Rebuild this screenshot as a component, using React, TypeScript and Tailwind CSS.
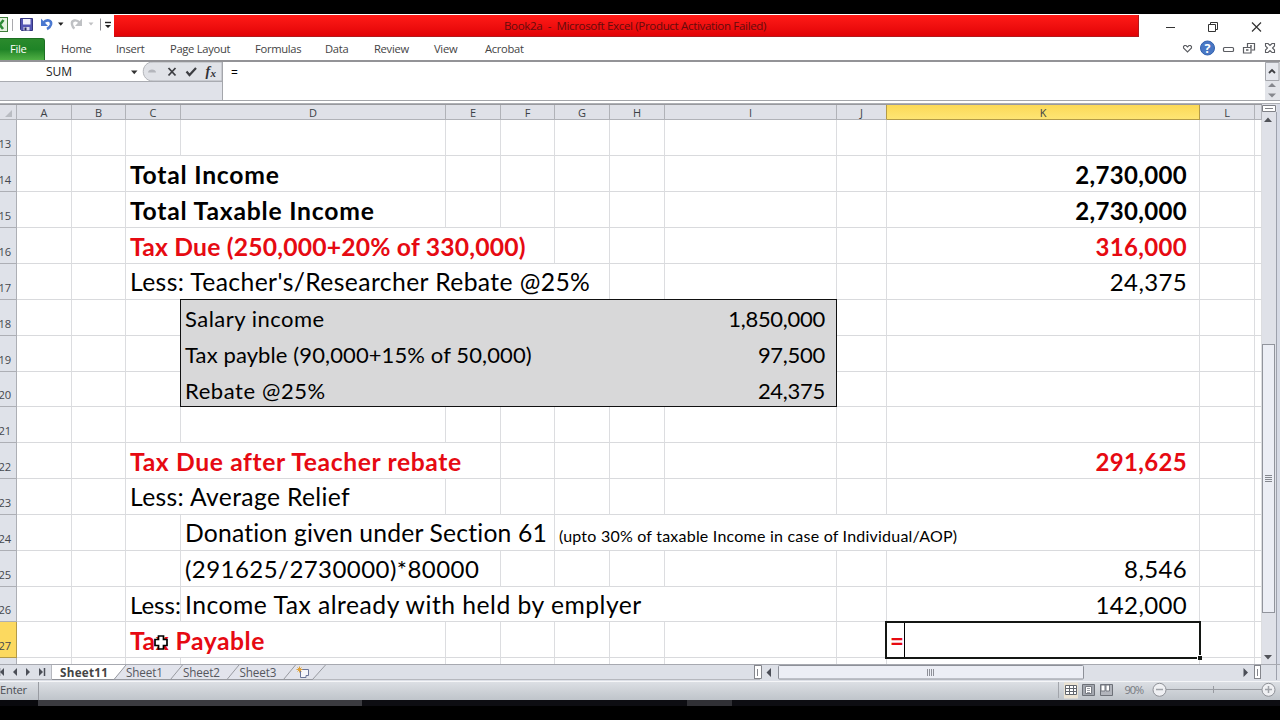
import type { ReactNode } from "react"
import clsx from "clsx"

type Cell = {
    text: string
    className: string
}

type Row = {
    no: number
    height: string
    cells?: Record<string, Cell>
    // columns whose right gridline is covered by overflowing text
    open?: string
    active?: boolean
}

const COLUMNS = "ABCDEFGHIJKLM".split("")

const GRID = "grid grid-cols-[17px_55px_54px_55px_265px_55px_54px_55px_55px_172px_50px_313px_55px_7px]"

const BOLD = "font-bold text-black pt-0.5"
const RED = "font-bold text-[#e60a12] pt-0.5"
const BOXED = "text-[22px] pt-[3px]"
const LABEL = "text-[24.700px]"

const ROWS: Row[] = [
    { no: 13, height: "h-9" },
    {
        no: 14, height: "h-9", open: "C", cells: {
            C: { text: "Total Income", className: `${BOLD} ${LABEL} tracking-[0.77px]` },
            K: { text: "2,730,000", className: `${BOLD} tracking-[0.35px]` },
        }
    },
    {
        no: 15, height: "h-9", open: "C", cells: {
            C: { text: "Total Taxable Income", className: `${BOLD} ${LABEL} tracking-[0.78px]` },
            K: { text: "2,730,000", className: `${BOLD} tracking-[0.35px]` },
        }
    },
    {
        no: 16, height: "h-9", open: "CDE", cells: {
            C: { text: "Tax Due (250,000+20% of 330,000)", className: `${RED} ${LABEL} tracking-[0.19px]` },
            K: { text: "316,000", className: `${RED} tracking-[0.35px]` },
        }
    },
    {
        no: 17, height: "h-9", open: "CDEF", cells: {
            C: { text: "Less: Teacher's/Researcher Rebate @25%", className: `${LABEL} pt-px tracking-[0.39px]` },
            K: { text: "24,375", className: "tracking-[0.35px]" },
        }
    },
    {
        no: 18, height: "h-9", cells: {
            D: { text: "Salary income", className: `${BOXED} tracking-[0.48px]` },
            I: { text: "1,850,000", className: `${BOXED} tracking-[-0.28px]` },
        }
    },
    {
        no: 19, height: "h-9", cells: {
            D: { text: "Tax payble (90,000+15% of 50,000)", className: `${BOXED} tracking-[0.11px]` },
            I: { text: "97,500", className: `${BOXED} tracking-[-0.28px]` },
        }
    },
    {
        no: 20, height: "h-[35px]", cells: {
            D: { text: "Rebate @25%", className: `${BOXED} tracking-[0.58px]` },
            I: { text: "24,375", className: `${BOXED} tracking-[-0.28px]` },
        }
    },
    { no: 21, height: "h-9" },
    {
        no: 22, height: "h-9", open: "CD", cells: {
            C: { text: "Tax Due after Teacher rebate", className: `${RED} ${LABEL} tracking-[0.62px]` },
            K: { text: "291,625", className: `${RED} tracking-[0.35px]` },
        }
    },
    {
        no: 23, height: "h-9", open: "C", cells: {
            C: { text: "Less: Average Relief", className: `${LABEL} pt-px tracking-[0.35px]` },
        }
    },
    {
        no: 24, height: "h-9", open: "DEGHIJ", cells: {
            D: { text: "Donation given under Section 61", className: `${LABEL} pt-px tracking-[0.18px]` },
            G: { text: "(upto 30% of taxable Income in case of Individual/AOP)", className: "text-base/7 pt-1.5 tracking-[0.22px]" },
        }
    },
    {
        no: 25, height: "h-9", open: "D", cells: {
            D: { text: "(291625/2730000)*80000", className: "tracking-[0.45px]" },
            K: { text: "8,546", className: "tracking-[0.35px]" },
        }
    },
    {
        no: 26, height: "h-[35px]", open: "DEFGH", cells: {
            C: { text: "Less:", className: "pt-px" },
            D: { text: "Income Tax already with held by emplyer", className: `${LABEL} pt-px tracking-[0.49px]` },
            K: { text: "142,000", className: "pt-px tracking-[0.35px]" },
        }
    },
    {
        no: 27, height: "h-9", open: "C", active: true, cells: {
            C: { text: "Tax Payable", className: `${RED} ${LABEL} tracking-[0.52px]` },
        }
    },
]

const MENU = [
    { label: "Home", width: "w-[55px]" },
    { label: "Insert", width: "w-[54px]" },
    { label: "Page Layout", width: "w-[85px]" },
    { label: "Formulas", width: "w-[70px]" },
    { label: "Data", width: "w-[49px]" },
    { label: "Review", width: "w-[60px]" },
    { label: "View", width: "w-[51px]" },
    { label: "Acrobat", width: "w-[56px]" },
]

function TitleBar() {
    return (
        <div className="flex h-[23px] bg-white">
            <div className="w-[114px] shrink-0">
                <svg width="114" height="23" viewBox="0 14 114 23">
                    <rect x="-6" y="17.500" width="13.500" height="14" fill="#e4f1df" stroke="#3f7d3a" />
                    <path d="M-4 20l7 9M3.500 20l-7 9" stroke="#2c8a35" strokeWidth="2.600" />
                    <path d="M12.500 19v12" stroke="#a9a9ad" />
                    <path d="M20.500 18.500h12v12h-11l-1-1z" fill="#5456b4" stroke="#34357f" />
                    <path d="M23 19h7.500v5.500H23z" fill="#f1f1fb" />
                    <path d="M23.500 27h6v3.500h-6z" fill="#d8d8ec" />
                    <path d="M24.500 27.500h2v3h-2z" fill="#24255e" />
                    <path d="M43.500 22.500c3-3.500 8.500-2.500 7.500 2-.5 2-2 3.500-4 4.500" fill="none" stroke="#4a78d0" strokeWidth="2.600" />
                    <path d="M41 18.500v7.500h7z" fill="#4a78d0" />
                    <path d="M58 22.500h5.500l-2.750 3.200zM105 25h6l-3 3z" fill="#222" />
                    <path d="M79.500 22.500c-3-3.500-8.500-2.500-7.500 2 .3 1.500 1 3 2.500 4" fill="none" stroke="#bfc1c4" strokeWidth="2.400" />
                    <path d="M82 18.500v7.500h-7z" fill="#bfc1c4" />
                    <path d="M88.500 22.500h5l-2.500 3z" fill="#c0c1c3" />
                    <path d="M100.500 18.500v12" stroke="#8c8c92" />
                    <path d="M105 22.500h6" stroke="#222" strokeWidth="1.400" />
                </svg>
            </div>
            <div className="mt-px h-[22px] w-[1025px] shrink-0 border-r border-b border-[#b3181c] bg-gradient-to-b from-[#ff1a17] to-[#e20206] pl-[390px] font-[Open_Sans,sans-serif] text-[11.500px] leading-[22px] whitespace-pre text-[#650c0c]">
                <span className="tracking-[-0.320px]">Book2a  -  Microsoft Excel (Product Activation Failed)</span>
            </div>
            <svg className="shrink-0" width="141" height="23" viewBox="1139 14 141 23" fill="none" stroke="#333">
                <path d="M1166 27.500h9" />
                <path d="M1208.500 24.500h7v7h-7zM1210.500 24v-1.500h7v7h-1.500" />
                <path d="M1252 22.500l9 9M1261 22.500l-9 9" strokeWidth="1.200" />
            </svg>
        </div>
    )
}

function MenuBar() {
    return (
        <div className="flex h-[23px] bg-white font-[Open_Sans,sans-serif] text-[11.200px] leading-[24px] tracking-[-0.300px] text-[#444]">
            <div className="mt-[1px] h-[22px] w-[45px] rounded-tr-[3px] border-t border-r border-[#1c6f22] bg-gradient-to-b from-[#2a8a2c] via-[#1f8427] to-[#4fb044] pl-[10px] leading-[20px] text-white">
                File
            </div>
            <div className="flex flex-1 pl-4">
                {MENU.map(item => (
                    <div key={item.label} className={clsx("shrink-0 whitespace-nowrap", item.width)}>
                        {item.label}
                    </div>
                ))}
            </div>
            <svg width="100" height="23" viewBox="1180 37 100 23" fill="none" stroke="#5b5d62">
                <path d="M1183.500 46.500l1-1h1.500l1.500 1.500 1.500-1.500h1.500l1 1v1.500l-4 4-4-4z" strokeWidth="1.100" />
                <circle cx="1207.500" cy="48" r="7" fill="#4877c4" stroke="#3261ae" />
                <text x="1204.400" y="52.500" fill="white" stroke="none" className="text-[12.500px] font-bold">?</text>
                <rect x="1223.500" y="47.500" width="10" height="4" rx="1" strokeWidth="1.200" />
                <path d="M1247.500 47v-3.500h7v6.500h-3" strokeWidth="1.200" />
                <path d="M1243.500 47.500h7.500v5.500h-7.500z" strokeWidth="1.200" />
                <path d="M1246 50h2.500M1250 46h2" strokeWidth="1.500" />
                <path d="M1265.500 43.500h2.500l2 2 2-2h2.500v2.500l-2 2 2 2v2.500h-2.500l-2-2-2 2h-2.500v-2.500l2-2-2-2z" strokeWidth="1.100" />
            </svg>
        </div>
    )
}

function FormulaBar() {
    return (
        <div className="flex h-[41px] border-t-2 border-[#939397] bg-white">
            <div className="flex w-[223px] shrink-0 flex-col border-r border-[#a4a6ab]">
                <div className="flex h-[20px] border-b border-[#a9abb1]">
                    <div className="w-[128px] pl-[46px] font-[Open_Sans,sans-serif] text-[12px] leading-[20px] tracking-[-0.100px] text-[#222]">SUM</div>
                    <svg width="94" height="19" viewBox="128 62 94 19">
                        <path d="M222 62h-69c-13 0-13 19 0 19h69z" fill="#e0e2e7" stroke="#b1b3b8" />
                        <path d="M148 72.500c0-4 8-4 8 0z" fill="#b4b6bc" />
                        <path d="M131 70.500h6.500l-3.250 3.700z" fill="#333" />
                        <path d="M168.500 68l7 7.500M175.500 68l-7 7.500" stroke="#3d3e42" strokeWidth="1.800" />
                        <path d="M186.500 71.500l3 3.500 6.500-7" fill="none" stroke="#3d3e42" strokeWidth="2.200" />
                        <text x="205.500" y="76" fill="#303136" className="font-[Liberation_Serif,serif] text-[14px] font-bold italic">f</text>
                        <text x="210.500" y="76.500" fill="#303136" className="font-[Liberation_Serif,serif] text-[11px] font-bold italic">x</text>
                    </svg>
                </div>
                <div className="h-[18px] bg-[#e0e2e9]" />
                <div className="h-px bg-[#a4a6ab]" />
            </div>
            <div className="flex flex-1 flex-col">
                <div className="h-[38px] pl-2 font-[Open_Sans,sans-serif] text-xs leading-[21px] text-black">=</div>
                <div className="h-px bg-[#a4a6ab]" />
            </div>
            <svg width="16" height="39" viewBox="1264 62 16 39">
                <path d="M1265 62h15v38h-15z" fill="#e2e4e9" />
                <path d="M1265.500 62.500h13.500v18h-13.500z" fill="#e6e8ee" stroke="#a5a7ad" />
                <path d="M1269 73l3-3 3 3" fill="none" stroke="#3d3e42" strokeWidth="1.800" />
                <path d="M1268 87h8l-4-4zM1268 93.500h8l-4 4z" fill="#85878d" />
                <path d="M1264 100.500h16" stroke="#a4a6ab" />
            </svg>
        </div>
    )
}

function HeaderRow() {
    return (
        <div className={`${GRID} h-4 border-t border-[#98999e] bg-[#dfe1e8] font-[Open_Sans,sans-serif] text-[11px] leading-[15px] text-[#3c3f45]`}>
            <div className="flex h-[15px] items-end justify-end border-r border-b border-[#b0b2b8] pr-1 pb-[2px]">
                <svg width="7" height="7"><path d="M7 0v7H0z" fill="#b9bcc2" /></svg>
            </div>
            {COLUMNS.map(col => (
                <div
                    key={col}
                    className={clsx(
                        "h-[15px] border-r border-b text-center",
                        col === "K" ? "border-[#b39a48] bg-gradient-to-b from-[#fbd957] to-[#fee573]" : "border-[#b0b2b8]",
                        col === "J" && "border-r-[#b39a48]"
                    )}
                >
                    {col === "M" ? "" : col}
                </div>
            ))}
        </div>
    )
}

function SheetRow({ row }: { row: Row }) {
    return (
        <div className={clsx(GRID, row.height)}>
            <div
                className={clsx(
                    "flex items-end overflow-hidden border-r border-b font-[Open_Sans,sans-serif] text-[11.200px] leading-[14px] tracking-[-0.200px] text-[#44474d]",
                    row.active ? "border-[#b39a48] bg-[#fcd95f]" : "border-[#adafb5] bg-[#dfe2e9]"
                )}
            >
                <span className="-ml-[1.500px] pb-1">{row.no}</span>
            </div>
            {COLUMNS.map(col => {
                const cell = row.cells?.[col]
                return (
                    <div
                        key={col}
                        className={clsx(
                            "flex items-center border-b border-b-[#d9dadd] whitespace-nowrap",
                            !row.open?.includes(col) && "border-r border-r-[#dcdde0]",
                            col === "K" || col === "I" ? "justify-end" : "justify-start pl-1",
                            col === "K" && "pr-3",
                            col === "I" && "pr-[11px]"
                        )}
                    >
                        {cell && <span className={clsx("relative z-10 leading-7", cell.className)}>{cell.text}</span>}
                    </div>
                )
            })}
        </div>
    )
}

function Spreadsheet({ children }: { children?: ReactNode }) {
    return (
        <div className="relative h-[560px] w-[1262px] shrink-0 overflow-hidden bg-white font-[Lato,sans-serif] text-[24px] text-black">
            <HeaderRow />
            {ROWS.map(row => <SheetRow key={row.no} row={row} />)}
            <div className={`${GRID} h-[7px]`}>
                <div className="border-r border-[#adafb5] bg-[#dfe2e9]" />
                {COLUMNS.map(col => <div key={col} className="border-r border-[#dcdde0]" />)}
            </div>
            {children}
        </div>
    )
}

function VerticalScroll() {
    return (
        <svg width="18" height="560" viewBox="1262 104 18 560">
            <path d="M1262 104h18v560h-18z" fill="#dfe1e8" />
            <path d="M1262.500 105.500h13v6h-13z" fill="#fff" stroke="#7f8187" />
            <path d="M1265 108.500h8" stroke="#7f8187" />
            <path d="M1264 122h8l-4-4.500zM1264 655h8l-4 4.500z" fill="#515359" />
            <rect x="1262.500" y="344.500" width="12" height="268" fill="#eceef5" stroke="#91949c" />
            <path d="M1265 475.500h7M1265 477.500h7M1265 479.500h7M1265 481.500h7" stroke="#85888f" />
            <path d="M1276.500 112v552" stroke="#9da1ac" />
            <path d="M1277 104h3v560h-3z" fill="#d5d9e4" />
        </svg>
    )
}

function SheetTabs() {
    return (
        <div className="flex h-[17px] border-t border-[#a7a9b0] bg-[#dde0e7]">
            <svg width="760" height="16" viewBox="0 665 760 16" className="font-[Open_Sans,sans-serif] text-[11.700px]">
                <path d="M52 665h74l-12 14H52z" fill="#fff" />
                <path d="M0 679.500h760M51.500 665v14" stroke="#b6b8be" />
                <path d="M52 679.500h62" stroke="#8d8f95" />
                <path d="M126 665h200l-13 14.500H114z" fill="#e2e4ec" />
                <path d="M114 679.500l12-14.500M170.500 679.500l12-14.500M227 679.500l12-14.500M283.500 679.500l12-14.500M312.500 679.500l13-14.500M114 679.500h199" fill="none" stroke="#989aa0" />
                <path d="M4 668v8l-4-4zM17 668v8l-4-4zM26 668v8l4-4zM39 668v8l4-4z" fill="#4b4e57" />
                <path d="M44.500 668v8M-.500 668v8" stroke="#4b4e57" strokeWidth="1.500" />
                <text x="60" y="676.500" fill="#444" textLength="48" className="font-bold">Sheet11</text>
                <text x="126" y="676.500" fill="#55575e" textLength="37">Sheet1</text>
                <text x="183" y="676.500" fill="#55575e" textLength="37">Sheet2</text>
                <text x="239.500" y="676.500" fill="#55575e" textLength="37">Sheet3</text>
                <path d="M300.500 669.500h8v6h-2.500v2h-5.500z" fill="#f5f6fb" stroke="#6c7699" />
                <path d="M299.500 666.500v6M296.500 669.500h6M297.500 667.500l4 4M301.500 667.500l-4 4" stroke="#dda13c" />
                <rect x="754.500" y="665.500" width="6" height="13" fill="#fff" stroke="#84868c" />
                <path d="M757.500 669v7" stroke="#84868c" />
            </svg>
            <svg width="520" height="16" viewBox="760 665 520 16">
                <path d="M760 665.500h1.500v13H760" fill="#fff" stroke="#84868c" />
                <path d="M771 668v9l-4.500-4.500zM1243.500 668v9l4.500-4.500z" fill="#4b4e57" />
                <rect x="778.500" y="665.500" width="305" height="13.500" rx="1" fill="#eceef5" stroke="#8d9098" />
                <path d="M927.500 669v7M929.500 669v7M931.500 669v7M933.500 669v7" stroke="#8e9098" />
                <rect x="1254.500" y="665.500" width="6" height="13" fill="#fff" stroke="#84868c" />
                <path d="M1257.500 669v7" stroke="#84868c" />
                <path d="M1276.500 665v15" stroke="#9da1ac" />
            </svg>
        </div>
    )
}

function StatusBar() {
    return (
        <div className="flex h-[19px] border-t border-[#f5f6f8] bg-gradient-to-b from-[#dcdfe4] to-[#bfc4ca] font-[Open_Sans,sans-serif] text-[11.200px] leading-[16px] text-[#4b4e54]">
            <div className="w-[39px] border-r border-[#999ca2] tracking-[-0.200px]">Enter</div>
            <div className="flex-1" />
            <svg width="222" height="18" viewBox="1058 682 222 18" fill="none">
                <path d="M1058.500 682v16" stroke="#a2a5ab" />
                <rect x="1064" y="682.500" width="14" height="16" fill="#ebe3d3" />
                <path d="M1065.500 685.500h11v9h-11zM1065.500 688.500h11M1065.500 691.500h11M1069.500 685.500v9M1073.500 685.500v9" fill="#fff" stroke="#62666d" />
                <path d="M1082.500 684.500h12v11h-12z" fill="#a4a8b0" stroke="#6d7178" />
                <path d="M1085.500 686.500h6v7h-6z" fill="#fff" stroke="#777b82" />
                <path d="M1087 688.500h3M1087 690.500h3M1087 692.500h3" stroke="#9a9da5" />
                <path d="M1100.500 684.500h12v11h-12z" fill="#b2b5bc" stroke="#6d7178" />
                <path d="M1101 685h4v6h-4zM1106 685h3.500v6h-3.500z" fill="#fff" stroke="#777b82" />
                <text x="1124.500" y="694" textLength="19.500" fill="#777a81" className="text-[11px]">90%</text>
                <path d="M1166 689.500h96M1213.500 686v7" stroke="#989ba1" />
                <circle cx="1159.500" cy="689.800" r="6.500" fill="#eff0f3" stroke="#8f9298" />
                <circle cx="1268.500" cy="689.800" r="6.500" fill="#eff0f3" stroke="#8f9298" />
                <path d="M1156 689.500h7M1265 689.500h7M1268.500 686v7" stroke="#a0a3a9" strokeWidth="1.500" />
            </svg>
        </div>
    )
}

export default function App() {
    return (
        <div className="flex h-[720px] w-[1280px] flex-col overflow-hidden bg-black pt-[14px]">
            <TitleBar />
            <MenuBar />
            <FormulaBar />
            <div className="h-[2px] bg-white" />
            <div className="flex h-[561px] border-t border-[#aeb0b5] bg-white">
                <Spreadsheet>
                    {/* rebate working box, under the text and over the gridlines */}
                    <div className="absolute top-[195px] left-[180px] h-[108px] w-[657px] border border-[#111] bg-[#d8d8d9]" />
                    {/* active cell in edit mode */}
                    <div className="absolute top-[517px] left-[885px] h-[38px] w-[316px] border-2 border-[#141714] bg-white">
                        <div className="h-full w-[18px] border-r border-black pl-[3px] text-[24px] leading-[36px] font-bold text-[#e60a12]">=</div>
                        <div className="absolute -right-[3px] -bottom-[3px] h-[5px] w-[5px] border-t border-l border-white bg-[#141714]" />
                    </div>
                    <svg className="absolute top-[531px] left-[154px] z-20" width="14" height="15">
                        <path d="M4.500 1h5v3.500H13v6H9.500V14h-5v-3.500H1v-6h3.500z" fill="#fff" stroke="#000" strokeWidth="1.700" />
                    </svg>
                </Spreadsheet>
                <VerticalScroll />
            </div>
            <SheetTabs />
            <StatusBar />
            <div className="flex h-[6px]">
                <div className="w-[38px] bg-[#09090d]" />
                <div className="w-[324px] bg-[#3b3b40]" />
                <div className="w-[325px] bg-[#0d0d12]" />
                <div className="w-[45px] bg-[#303035]" />
                <div className="flex-1 bg-[#0d0d12]" />
            </div>
        </div>
    )
}
